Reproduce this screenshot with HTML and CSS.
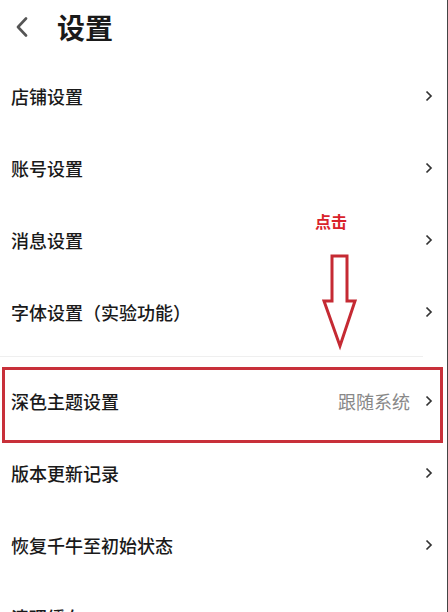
FILE: index.html
```html
<!DOCTYPE html>
<html lang="zh-CN">
<head>
<meta charset="utf-8">
<title>设置</title>
<link rel="stylesheet" href="styles.css">
</head>
<body>
<div class="screen">
  <header class="header">
    <svg class="back" width="14" height="20" viewBox="0 0 14 20"><polyline points="11,1.5 3,10 11,18.5" fill="none" stroke="#555" stroke-width="2.6" stroke-linecap="round" stroke-linejoin="round"/></svg>
    <h1 class="title">设置</h1>
  </header>
  <div class="group">
    <div class="row"><span class="label">店铺设置</span><svg class="chev" width="8" height="12" viewBox="0 0 8 12"><polyline points="1.5,1.5 6,6 1.5,10.5" fill="none" stroke="#333" stroke-width="1.7"/></svg></div>
    <div class="row"><span class="label">账号设置</span><svg class="chev" width="8" height="12" viewBox="0 0 8 12"><polyline points="1.5,1.5 6,6 1.5,10.5" fill="none" stroke="#333" stroke-width="1.7"/></svg></div>
    <div class="row"><span class="label">消息设置</span><svg class="chev" width="8" height="12" viewBox="0 0 8 12"><polyline points="1.5,1.5 6,6 1.5,10.5" fill="none" stroke="#333" stroke-width="1.7"/></svg></div>
    <div class="row"><span class="label">字体设置（实验功能）</span><svg class="chev" width="8" height="12" viewBox="0 0 8 12"><polyline points="1.5,1.5 6,6 1.5,10.5" fill="none" stroke="#333" stroke-width="1.7"/></svg></div>
  </div>
  <div class="divider"></div>
  <div class="group">
    <div class="row row-marked"><span class="label">深色主题设置</span><span class="value">跟随系统</span><svg class="chev" width="8" height="12" viewBox="0 0 8 12"><polyline points="1.5,1.5 6,6 1.5,10.5" fill="none" stroke="#333" stroke-width="1.7"/></svg></div>
    <div class="row"><span class="label">版本更新记录</span><svg class="chev" width="8" height="12" viewBox="0 0 8 12"><polyline points="1.5,1.5 6,6 1.5,10.5" fill="none" stroke="#333" stroke-width="1.7"/></svg></div>
    <div class="row"><span class="label">恢复千牛至初始状态</span><svg class="chev" width="8" height="12" viewBox="0 0 8 12"><polyline points="1.5,1.5 6,6 1.5,10.5" fill="none" stroke="#333" stroke-width="1.7"/></svg></div>
    <div class="row"><span class="label">清理缓存</span><svg class="chev" width="8" height="12" viewBox="0 0 8 12"><polyline points="1.5,1.5 6,6 1.5,10.5" fill="none" stroke="#333" stroke-width="1.7"/></svg></div>
  </div>
  <div class="note">点击</div>
  <svg class="arrow" width="44" height="102" viewBox="0 0 44 102"><polygon points="14,6 29,6 29,51 37,51 22,96 6,51 14,51" fill="none" stroke="#c52a33" stroke-width="3" stroke-linejoin="miter"/></svg>
</div>
</body>
</html>
```
FILE: styles.css
```css
* { box-sizing: border-box; }
html, body { margin: 0; padding: 0; background: #fff; }
body { font-family: "Noto Sans CJK SC", "Noto Sans", sans-serif; }
.screen {
  position: relative;
  width: 448px;
  height: 612px;
  overflow: hidden;
  background: #fff;
  border-right: 1px solid #444;
}
.header {
  display: flex;
  align-items: center;
  height: 54px;
  margin-bottom: 6px;
}
.back { margin-left: 15px; flex: none; }
.title {
  margin: 0 0 0 28px;
  font-size: 28px;
  font-weight: 700;
  color: #1a1a1a;
  line-height: 1;
}
.group { display: flex; flex-direction: column; }
.row {
  position: relative;
  display: flex;
  align-items: center;
  height: 72px;
  padding: 0 14px 0 11px;
}
.label {
  flex: 1;
  font-size: 18px;
  font-weight: 500;
  color: #1a1a1a;
}
.value {
  font-size: 18px;
  color: #888;
  margin-right: 15px;
}
.chev { flex: none; }
.divider {
  height: 1px;
  background: #efefef;
  margin: 8px 24px 8px 0;
}
.row-marked::after {
  content: "";
  position: absolute;
  left: 2px;
  top: 2px;
  width: 435px;
  height: 70px;
  border: 3px solid #c8303a;
}
.note {
  position: absolute;
  left: 315px;
  top: 212px;
  font-size: 16px;
  font-weight: 700;
  color: #d9232b;
  line-height: 1.2;
}
.arrow { position: absolute; left: 318px; top: 250px; }
```
